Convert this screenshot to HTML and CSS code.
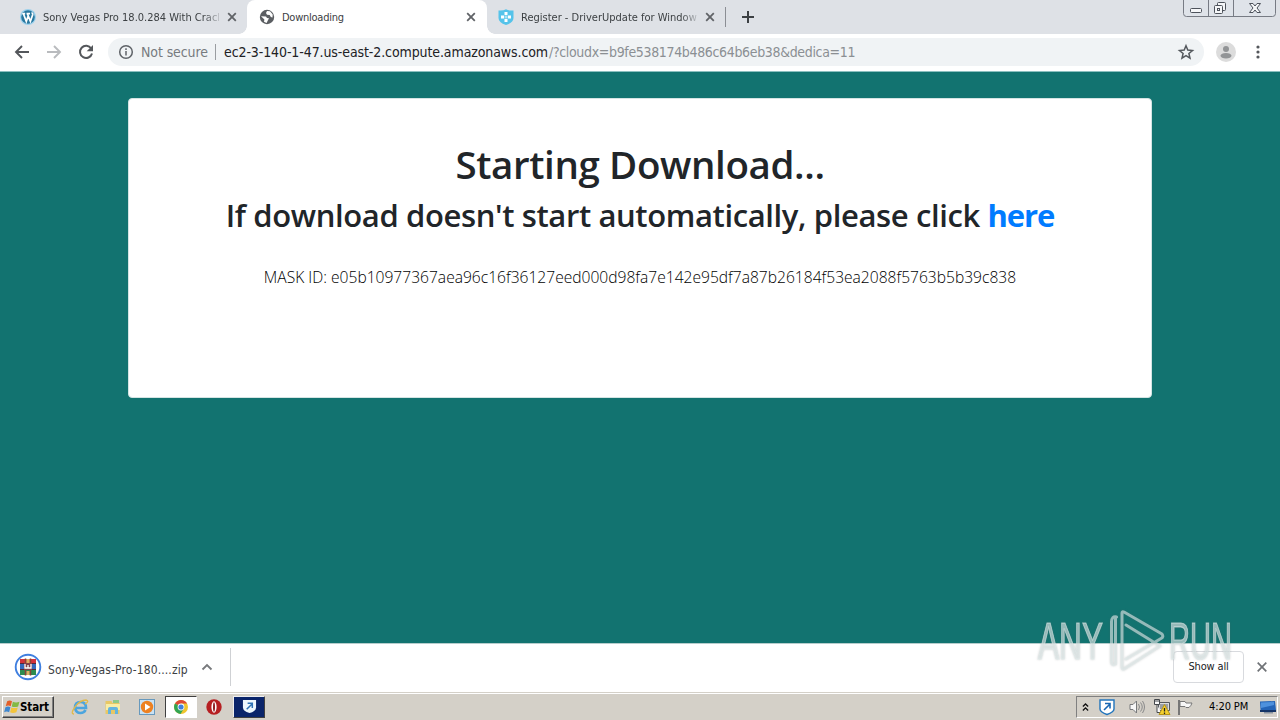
FILE: index.html
```
<!DOCTYPE html>
<html lang="en">
<head>
<meta charset="utf-8">
<title>Downloading</title>
<link rel="stylesheet" href="styles.css">
</head>
<body>
<div class="screen">
  <header class="tabstrip">
    <div class="tab tab-first">
      <svg class="favicon" viewBox="0 0 16 16"><circle cx="8" cy="8" r="8" fill="#9bd0ec"/><circle cx="8" cy="8" r="6.8" fill="#28779f"/><path d="M2.200 4.700h3M6.500 4.700h3.500M3.500 5l2.800 7.400 1.900-5.400M7.500 5l2.900 7.400 2.300-6.600c.3-1-.7-1.500-.5-2.400" fill="none" stroke="#fff" stroke-width="1.700"/></svg>
      <span class="tab-title title-vegas">Sony Vegas Pro 18.0.284 With Crack</span>
      <svg class="tab-close" viewBox="0 0 10 10"><path d="M1.200 1.200l7.600 7.600M8.800 1.200L1.200 8.800"/></svg>
    </div>
    <div class="tab tab-active">
      <svg class="favicon" viewBox="0 0 16 16"><circle cx="8" cy="8" r="7.200" fill="#5b5e62"/><path d="M2 7.200l5 .2 1 1.500 2 .4-1.200 2.200L7.600 14 5 12.800l.4-2.400zM8 2l3 .2 2.700 3.400-.2 3-1.700-.5L10.700 6 8 5.700 7 4z" fill="#fff"/></svg>
      <span class="tab-title title-down">Downloading</span>
      <svg class="tab-close" viewBox="0 0 10 10"><path d="M1.200 1.200l7.600 7.600M8.800 1.200L1.200 8.800"/></svg>
    </div>
    <div class="tab tab-last">
      <svg class="favicon" viewBox="0 0 16 16"><path d="M.5 1.500Q5 2 8 .3 11 2 15.500 1.500V9q0 4.500-7.500 7Q.5 13.500.5 9z" fill="#55c3ea"/><path d="M6.500 3h3v3h-3zM6.500 10h3v3h-3zM3 6.500h3v3H3zM10 6.500h3v3h-3z" fill="#fff"/><path d="M6.500 6.500h3v3h-3z" fill="#a8e2f5"/></svg>
      <span class="tab-title title-reg">Register - DriverUpdate for Windows</span>
      <svg class="tab-close" viewBox="0 0 10 10"><path d="M1.200 1.200l7.600 7.600M8.800 1.200L1.200 8.800"/></svg>
    </div>
    <i class="tab-divider"></i>
    <svg class="new-tab" viewBox="0 0 14 14"><path d="M7 1v12M1 7h12" stroke="#3c4043" stroke-width="2"/></svg>
    <svg class="caption" viewBox="0 0 94 18"><path d="M.5-1v14.500q0 3 3 3h86q3 0 3-3V-1M25.500-1v17.500M50.500-1v17.500" fill="#dfe3e9" stroke="#777b84"/><g fill="#f5f6f8" stroke="#4d525b"><rect x="7.500" y="8.500" width="11" height="4" rx="1"/><rect x="34.500" y="2.500" width="8" height="8" rx="1"/><rect x="31.500" y="5.500" width="8" height="8" rx="1"/><rect x="34.500" y="8.500" width="2" height="2"/><path d="M66.500 3.500h3.500l2 2.500 2-2.500h3.500L74 8l3.500 4.500H74L72 10l-2 2.500h-3.500L70 8z"/></g></svg>
  </header>

  <nav class="toolbar">
    <svg class="nav-icon" viewBox="0 0 16 16"><path d="M15 8H2M8 2L2 8l6 6" fill="none" stroke="#54575b" stroke-width="1.900"/></svg>
    <svg class="nav-icon" viewBox="0 0 16 16"><path d="M1 8h13M8 2l6 6-6 6" fill="none" stroke="#b9bbbe" stroke-width="1.900"/></svg>
    <svg class="nav-icon" viewBox="0 0 16 16"><path d="M13.200 4.500A6.100 6.100 0 1 0 14 9.500" fill="none" stroke="#54575b" stroke-width="2"/><path d="M15 1v6.300H8.700z" fill="#54575b"/></svg>
    <div class="omnibox">
      <svg class="info" viewBox="0 0 16 16"><circle cx="8" cy="8" r="6.300" fill="none" stroke="#5f6368" stroke-width="1.500"/><path d="M8 7v4.500M8 4.300v1.700" stroke="#5f6368" stroke-width="1.500"/></svg>
      <span class="not-secure">Not secure</span>
      <i class="url-divider"></i>
      <span class="url-host">ec2-3-140-1-47.us-east-2.compute.amazonaws.com</span><span class="url-path">/?cloudx=b9fe538174b486c64b6eb38&amp;dedica=11</span>
      <svg class="star" viewBox="0 0 16 16"><path d="M8 1.800l1.800 4.300 4.700.4-3.600 3 1.100 4.600L8 11.700l-4 2.400 1.100-4.600-3.600-3 4.700-.4z" fill="none" stroke="#54585d" stroke-width="1.500"/></svg>
    </div>
    <svg class="avatar" viewBox="0 0 20 20"><circle cx="10" cy="10" r="10" fill="#dcdcdc"/><circle cx="10" cy="7" r="3" fill="#929496"/><ellipse cx="10" cy="13.700" rx="5.500" ry="2.800" fill="#929496"/></svg>
    <svg class="menu" viewBox="0 0 4 14"><g fill="#54575b"><circle cx="2" cy="2" r="1.600"/><circle cx="2" cy="7" r="1.600"/><circle cx="2" cy="12" r="1.600"/></g></svg>
  </nav>

  <main class="page">
    <section class="card">
      <h1>Starting Download...</h1>
      <h2>If download doesn't start automatically, please click <a class="here">here</a></h2>
      <p>MASK ID: e05b10977367aea96c16f36127eed000d98fa7e142e95df7a87b26184f53ea2088f5763b5b39c838</p>
    </section>
  </main>

  <div class="shelf">
    <svg class="zip" viewBox="0 0 28 28"><circle cx="14" cy="14" r="12.300" fill="#fff" stroke="#3f7fdf" stroke-width="1.900"/><path d="M6 6h16v5H6z" fill="#d4313c"/><path d="M6 11h16v5H6z" fill="#3669bd"/><path d="M6 16h16v6H6z" fill="#2c8c50"/><path d="M6 10.500h16M6 16.500h16" stroke="#592536"/><path d="M11.500 5.500v17M16.500 5.500v17" stroke="#874339" stroke-width="1.500"/><path d="M10 10h8v7h-8z" fill="#86404a"/><path d="M11 11v4h6v-4M14 12v3" stroke="#fff" stroke-width="1.300" fill="none"/><path d="M12.500 6h3v4h-3zM12.500 18h3v4h-3z" fill="#dfae63"/></svg>
    <span class="filename">Sony-Vegas-Pro-180....zip</span>
    <svg class="chevron" viewBox="0 0 12 8"><path d="M1.500 6.500L6 2l4.500 4.500" fill="none" stroke="#77797c" stroke-width="1.800"/></svg>
    <i class="shelf-divider"></i>
    <span class="show-all">Show all</span>
    <svg class="shelf-close" viewBox="0 0 10 10"><path d="M.7.7l8.600 8.600M9.300.7L.7 9.300"/></svg>
  </div>

  <footer class="taskbar">
    <div class="start"><svg class="flag" viewBox="0 0 18 16"><path d="M3.500 1.500q3-2 5.500 0L7.500 7q-2.700-1.700-5.700 0z" fill="#e35f28"/><path d="M10 2q3.500 1.700 7.500 0L16 7.300q-4 1.500-7.300 0z" fill="#83b944"/><path d="M1.500 8.300q3-1.700 5.700 0L5.700 14Q3 12 0 14z" fill="#3e87cf"/><path d="M8.300 8.500q3.500 1.500 7.300 0L14 14q-4 1.700-7.200 0z" fill="#f3c43b"/></svg><b>Start</b></div>
    <svg class="task-icon ie" viewBox="0 0 18 18"><path d="M4 10h11q0-6-5.500-6T4 10q1 5 5.500 5 3.500 0 5-3" fill="none" stroke="#4ca5de" stroke-width="2.700"/><path d="M3 16Q-1 16 4 9q5-7 11-7 4 1-1 4" fill="none" stroke="#e1b94a" stroke-width="1.300"/></svg>
    <svg class="task-icon explorer" viewBox="0 0 18 18"><path d="M1.500 3h6l1 2h7v11h-14z" fill="#e8c765"/><path d="M2 6h14v6H2z" fill="#f9eda5"/><path d="M4 16v-5q0-2 2-2h6q2 0 2 2v5h-3v-4H7v4z" fill="#64b4df"/><path d="M9 2h6v3H9z" fill="#8ec989"/></svg>
    <svg class="task-icon media" viewBox="0 0 18 18"><rect x="1.500" y="1.500" width="15" height="15" fill="#c9e2f4" stroke="#6799bd"/><circle cx="9" cy="9" r="6.200" fill="#ed8121"/><path d="M7 5.500v7l5.500-3.500z" fill="#fff"/></svg>
    <div class="task-active"><svg viewBox="0 0 14 14"><circle cx="7" cy="7" r="7" fill="#f0c52e"/><path d="M7 7L1 3.500A7 7 0 0 1 13.100 3.500H7z" fill="#df4936"/><path d="M7 7L1 3.500A7 7 0 0 0 6.500 14L10 8.500z" fill="#32a553"/><circle cx="7" cy="7" r="3.400" fill="#fff"/><circle cx="7" cy="7" r="2.600" fill="#4080dc"/></svg></div>
    <svg class="task-icon opera" viewBox="0 0 18 18"><circle cx="9" cy="9" r="7.700" fill="#b61f22"/><ellipse cx="9" cy="9" rx="2.600" ry="5.700" fill="#fff"/><ellipse cx="9" cy="9" rx="1" ry="4.700" fill="#922026"/></svg>
    <div class="task-blue"><svg viewBox="0 0 16 16"><path d="M1 1h14v8q0 4-7 6-7-2-7-6z" fill="#eef7fd"/><path d="M5 11l6-6M6 4.500h5v5" stroke="#2e72b5" stroke-width="1.600" fill="none"/></svg></div>
    <div class="tray">
      <svg class="up" viewBox="0 0 8 10"><path d="M1 4.500l3-3 3 3M1 9l3-3 3 3" fill="none" stroke="#111" stroke-width="1.500"/></svg>
      <svg class="shield" viewBox="0 0 16 16"><path d="M1 1h14v9q0 3-7 5.500Q1 13 1 10z" fill="#fff" stroke="#2174bc" stroke-width="1.400"/><path d="M5 11l6-6M6 4.500h5v5" stroke="#1967b3" stroke-width="1.600" fill="none"/></svg>
      <svg class="sound" viewBox="0 0 16 16"><path d="M1 5.500h3L7.500 2v12L4 10.500H1z" fill="#f7f7f7" stroke="#77797b"/><path d="M9.500 5q2 3 0 6M11.500 3.500q3.500 4.500 0 9M13.500 2q4 6 0 12" fill="none" stroke="#88898a"/></svg>
      <svg class="network" viewBox="0 0 16 16"><path d="M4.500 3.500h11v8h-11z" fill="#ddd" stroke="#55595d"/><path d="M6 5h8v5H6z" fill="#9a9fa5"/><path d="M.5.500h5v5h-5zM3 5.500v8h4" fill="#fafafa" stroke="#44484c"/><path d="M2 0v3M4 0v3" stroke="#44484c"/><path d="M10.500 5.500L16 15.500H5z" fill="#f5d02d" stroke="#b69519"/><path d="M10.500 9v3.500M10.500 13.500V15" stroke="#222" stroke-width="1.300"/></svg>
      <svg class="tray-flag" viewBox="0 0 16 16"><path d="M2 1v15" stroke="#777" stroke-width="2"/><path d="M3 2.500h5l1 1.500h6q-1 3-3 4.500H9L8 7.500H3z" fill="#f7f7f7" stroke="#777"/></svg>
      <span class="clock">4:20 PM</span>
      <svg class="desktop" viewBox="0 0 16 14"><path d="M0 1.500L15 1l1 9H.5z" fill="#2464b7"/><path d="M1 2.500l13-.5v3L1 8z" fill="#4e91dd"/><path d="M0 10h16v2H0z" fill="#163667"/><path d="M4 12h9v1.500H4z" fill="#88929e"/></svg>
    </div>
  </footer>

  <div class="watermark">
    <span class="wm-any">ANY</span>
    <svg viewBox="0 0 60 66"><path d="M6.500 55V10.500q0-2 1-2.500Q2.500 7 2.500 13v40q0 4 4 2M17 16l34 21L15 60q-2 1-2-2V4q0-2 2-1l38 22q2 3-1 4.500L17 50" fill="none" stroke="currentColor" stroke-width="3" stroke-linejoin="round" stroke-linecap="round"/></svg>
    <span class="wm-run">RUN</span>
  </div>
</div>
</body>
</html>
```
FILE: styles.css
```
* { box-sizing: border-box; }
body { margin: 0; font-family: "DejaVu Sans Condensed", "DejaVu Sans", sans-serif; color: #202124; }
svg { display: block; flex: none; overflow: visible; }
.screen { position: relative; width: 1280px; height: 720px; display: flex; flex-direction: column; overflow: hidden; background: #fff; }
.tabstrip { height: 34px; flex: none; display: flex; align-items: flex-start; background: #dee1e6; }
.tab { height: 34px; display: flex; align-items: center; font-size: 11px; }
.tab-first { width: 247px; padding-left: 20px; background: #dee1e6; }
.tab-active { width: 240px; padding-left: 12px; background: #fff; border-radius: 8px 8px 0 0; position: relative; }
.tab-active::before, .tab-active::after { content: ""; position: absolute; bottom: 0; width: 8px; height: 8px; }
.tab-active::before { left: -8px; background: radial-gradient(circle at 0 0, transparent 7.5px, #fff 8px); }
.tab-active::after { right: -8px; background: radial-gradient(circle at 100% 0, transparent 7.5px, #fff 8px); }
.tab-last { width: 238px; padding-left: 11px; }
.favicon { width: 16px; height: 16px; margin-right: 7px; }
.tab-title { width: 176px; overflow: hidden; white-space: nowrap; color: #3c4043; line-height: 16px; padding-top: 1px; }
.title-vegas, .title-reg { -webkit-mask-image: linear-gradient(90deg, #000 160px, transparent 180px); mask-image: linear-gradient(90deg, #000 160px, transparent 180px); }
.tab-close { width: 10px; height: 10px; margin-left: 8px; fill: none; stroke: #606367; stroke-width: 1.8; }
.title-down { letter-spacing: -.25px; }
.tab-divider { width: 1px; height: 20px; margin-top: 7px; background: #8b8e94; }
.new-tab { width: 14px; height: 14px; margin: 10px 0 0 15px; }
.caption { width: 94px; height: 18px; margin-left: auto; margin-right: 3px; }
.toolbar { height: 38px; flex: none; display: flex; align-items: center; padding: 0 20px 2px 14px; background: #fff; border-bottom: 1px solid #8bbfbf; }
.nav-icon { width: 16px; height: 16px; margin-right: 16px; }
.omnibox { width: 1096px; height: 28px; display: flex; align-items: center; padding-left: 10px; border-radius: 14px; background: #f0f3f5; font-size: 14px; white-space: nowrap; margin-left: -2px; }
.info { width: 16px; height: 16px; margin-right: 7px; }
.not-secure { width: 67px; font-size: 14px; color: #777b7f; letter-spacing: -.1px; }
.url-divider { width: 1px; height: 16px; background: #9a9da1; margin: 0 8px 0 7px; }
.url-host { width: 325px; letter-spacing: -.1px; }
.url-path { color: #8b8f93; letter-spacing: -.34px; }
.star { width: 16px; height: 16px; margin-left: auto; margin-right: 10px; }
.avatar { width: 20px; height: 20px; margin-left: 12px; }
.menu { width: 4px; height: 14px; margin-left: 20px; }
.page { height: 571px; flex: none; padding-top: 26px; background: #127370; }
.card { width: 1024px; height: 300px; margin: 0 auto; padding-top: 42px; border: 1px solid #d4e4e3; border-radius: 4px; background: #fff; color: #212529; text-align: center; white-space: nowrap; }
.card h1, .card h2 { margin: 0; font-family: "Open Sans", "Noto Sans", sans-serif; font-weight: 600; }
.card h1 { font-size: 38.5px; line-height: 47px; letter-spacing: -.38px; }
.card h2 { margin-top: 8px; font-size: 31px; line-height: 38px; letter-spacing: -.38px; }
.here { color: #007bff; font-weight: 700; letter-spacing: -1.1px; }
.card p { margin: 31px 0 0; font: 300 15.6px/24px "Open Sans", "Noto Sans", sans-serif; color: #000; }
.shelf { height: 50px; flex: none; display: flex; align-items: center; padding: 0 13px 3px 14px; border-top: 1px solid #b6cdcc; background: #fff; }
.zip { width: 28px; height: 28px; margin-right: 6px; }
.filename { width: 140px; font-size: 12px; letter-spacing: .12px; color: #3c4043; white-space: nowrap; padding-top: 5px; }
.chevron { width: 12px; height: 8px; margin-left: 13px; }
.shelf-divider { width: 1px; height: 38px; background: #cfd1d4; margin-left: 17px; }
.show-all { width: 71px; height: 32px; margin-left: auto; border: 1px solid #d8dade; border-radius: 4px; font-size: 11px; letter-spacing: -.15px; line-height: 30px; text-align: center; }
.shelf-close { width: 10px; height: 10px; margin-left: 13px; fill: none; stroke: #6f7276; stroke-width: 1.7; }
.taskbar { height: 27px; flex: none; display: flex; align-items: center; padding: 0 2px 1px; background: #d4d0c8; border-top: 1px solid #fff; box-shadow: 0 -1px #d4d0c8; }
.start { width: 52px; height: 22px; display: flex; align-items: center; padding-left: 1px; border: 1px solid; border-color: #fff #404040 #404040 #fff; box-shadow: inset -1px -1px #808080; font-size: 11.5px; letter-spacing: -.1px; color: #000; }
.flag { width: 16px; height: 14px; }
.task-icon { width: 18px; height: 18px; }
.ie { margin-left: 17px; }
.explorer { margin-left: 15px; }
.media { margin-left: 16px; }
.task-active { width: 32px; height: 22px; display: grid; place-items: center; margin-left: 9px; background: #fff; border: 1px solid; border-color: #404040 #fff #fff #404040; }
.task-active svg { width: 14px; height: 14px; }
.opera { margin-left: 8px; }
.task-blue { width: 32px; height: 22px; margin-left: 10px; display: grid; place-items: center; background: #0a246a; border: 1px solid; border-color: #eee #404040 #404040 #eee; }
.task-blue svg { width: 15px; height: 15px; }
.tray { width: 202px; height: 22px; display: flex; align-items: center; margin-left: auto; padding-left: 5px; border: 1px solid; border-color: #808080 #fff #fff #808080; }
.up { width: 7px; height: 10px; }
.shield { width: 16px; height: 16px; margin-left: 10px; }
.sound { width: 16px; height: 16px; margin-left: 14px; }
.network { width: 16px; height: 16px; margin-left: 9px; }
.tray-flag { width: 16px; height: 16px; margin-left: 7px; }
.clock { width: 42px; margin-left: 16px; color: #000; font-size: 11px; letter-spacing: -.1px; white-space: nowrap; }
.desktop { width: 16px; height: 14px; margin-left: 9px; }
.watermark { position: absolute; left: 1038px; top: 609px; display: flex; width: 200px; height: 66px; color: rgba(222, 232, 232, .62); filter: drop-shadow(0 0 1px rgba(90, 100, 100, .4)); font-family: "Liberation Sans", sans-serif; pointer-events: none; }
.watermark span { display: block; height: 50px; margin-top: 8px; font-size: 51px; line-height: 50px; transform-origin: 0 0; -webkit-text-stroke: 1.2px rgba(222, 232, 232, .62); }
.wm-any { width: 71px; transform: scaleX(.62); }
.watermark svg { width: 60px; height: 66px; }
.wm-run { width: 64px; transform: scaleX(.57); }
```
